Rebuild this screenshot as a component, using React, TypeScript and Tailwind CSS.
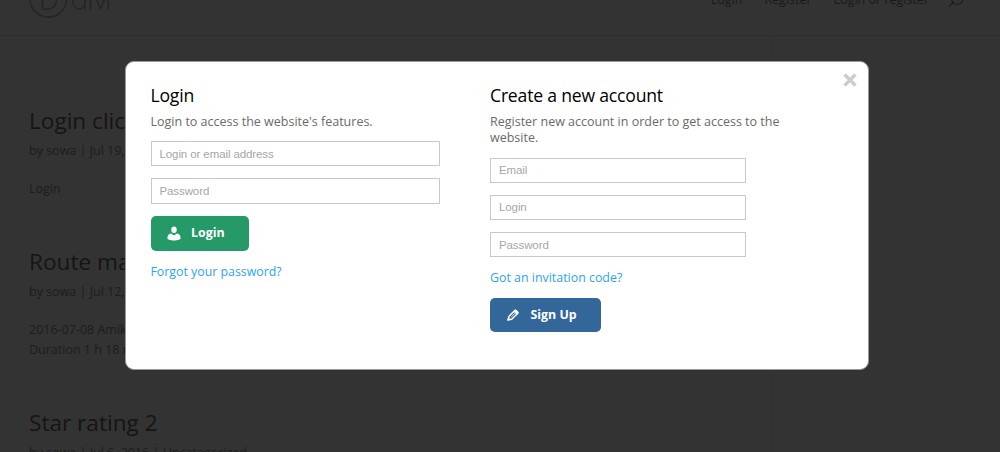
import type { ReactNode } from 'react';

type Post = { title: string; meta: string; body: string[] };

const posts: Post[] = [
    { title: 'Login click', meta: 'by sowa | Jul 19,', body: ['Login'] },
    { title: 'Route map', meta: 'by sowa | Jul 12,', body: ['2016-07-08 Amik', 'Duration 1 h 18 m'] },
    { title: 'Star rating 2', meta: 'by sowa | Jul 6, 2016 | Uncategorized', body: [] },
];

function Field({ label, type = 'text' }: { label: string; type?: string }) {
    return (
        <input
            type={type}
            placeholder={label}
            className="block w-full h-[25.4px] mb-[11.8px] px-2 border border-[#c8c8c8] bg-white font-['Liberation_Sans',sans-serif] text-[11.5px] tracking-[-0.1px] text-[#444] placeholder:text-[#a6a6a6] outline-none"
        />
    );
}

function ActionButton({ className, icon, children }: { className: string; icon: ReactNode; children: ReactNode }) {
    return (
        <button className={`flex items-center h-[34.5px] pl-4 rounded-[5px] text-white text-[12.4px] font-bold ${className}`}>
            {icon}
            <span className="ml-[10.5px]">{children}</span>
        </button>
    );
}

function UserIcon() {
    return (
        <svg width="14" height="15" viewBox="0 0 14 15" fill="currentColor">
            <ellipse cx="7" cy="3.7" rx="2.7" ry="3.3" />
            <path d="M4 7.4 7 9.6 10 7.4C12.5 8 13.6 9.5 13.6 12.2 13.6 13.6 10.5 14.4 7 14.4S.4 13.6.4 12.2C.4 9.5 1.5 8 4 7.4Z" />
        </svg>
    );
}

function PencilIcon() {
    return (
        <svg width="14" height="14" viewBox="0 0 14 14" fill="none" stroke="currentColor">
            <path d="M2.2 11.8 3 8.3 8.8 2.5C9.6 1.7 12.6 4.4 11.8 5.2L5.7 11.2Z" strokeWidth="1.5" strokeLinejoin="round" />
            <path d="M5 9.2 9.6 4.6" strokeWidth=".8" />
            <path d="M1.2 12.8 2.1 9.2 4.8 11.9Z" fill="currentColor" stroke="none" />
            <path d="M8.4 2.5 11.8 5.7" strokeWidth="2.6" />
        </svg>
    );
}

function Header() {
    return (
        <header className="flex justify-between h-9 pl-[29px] pr-[35px] border-b border-[#2d2d2d]">
            <div className="flex -mt-5">
                <svg width="82" height="40" viewBox="0 0 82 40" fill="none" stroke="#22242a">
                    <circle cx="19.3" cy="19" r="18.2" strokeWidth="1.4" />
                    <path d="M13.5 9v20h5c6 0 9-4 9-10s-3-10-9-10Z" strokeWidth="1.4" />
                    <path d="M56 8v21.5M56 22.3a6 6.8 0 1 0-12 0 6 6.8 0 1 0 12 0M61.5 15v14.5M65.5 15l6 14 6-14M79.3 15v14.5" strokeWidth="1.4" />
                </svg>
            </div>
            <nav className="flex -mt-[10px] text-[12.5px] leading-5 text-[#1a1a1a]">
                <span className="mr-[22px]">Login</span>
                <span className="mr-[22px]">Register</span>
                <span className="mr-[18px]">Login or register</span>
                <svg width="18" height="18" viewBox="0 0 18 18" fill="none" stroke="currentColor" strokeWidth="1.1">
                    <circle cx="10.3" cy="8.6" r="5.7" />
                    <path d="M6.2 12.5 2 16.4" />
                </svg>
            </nav>
        </header>
    );
}

export default function App() {
    return (
        <div className="relative h-[452px] overflow-hidden bg-[#333] font-['Open_Sans',sans-serif]">
            <Header />
            <div className="flex h-[416px]">
                <main className="w-[771px] shrink-0 pl-[29px] pt-[68px] border-r border-[#303030] overflow-hidden">
                    {posts.map((post) => (
                        <article key={post.title} className="mb-[46px]">
                            <h2 className="text-[22.6px] leading-[34px] text-[#151515]">{post.title}</h2>
                            <p className="mt-[3px] text-[12.5px] leading-5 text-[#1d1d1d]">{post.meta}</p>
                            <div className="mt-[18px] text-[12.5px] leading-5 text-[#1d1d1d]">
                                {post.body.map((line) => <p key={line}>{line}</p>)}
                            </div>
                        </article>
                    ))}
                </main>
            </div>

            <div className="absolute left-[125px] top-[61px] flex w-[743.5px] h-[309px] pl-[24.5px] pt-[21px] rounded-[9px] border border-[#999] bg-white">
                <section className="w-[289.5px] mr-[50px]">
                    <h3 className="text-[17.6px] tracking-[-0.2px] leading-6 text-black">Login</h3>
                    <p className="mt-[7px] mb-[11px] text-[12.5px] leading-4 text-[#6a6a6a]">Login to access the website's features.</p>
                    <Field label="Login or email address" />
                    <Field label="Password" type="password" />
                    <ActionButton className="w-[98px] mt-[12.6px] bg-[#269969]" icon={<UserIcon />}>Login</ActionButton>
                    <a href="#" className="block mt-3 text-[12.35px] leading-[18px] text-[#2ea3f2]">Forgot your password?</a>
                </section>
                <section className="w-[310px]">
                    <h3 className="text-[17.6px] tracking-[-0.2px] leading-6 text-black">Create a new account</h3>
                    <p className="mt-[7px] mb-[11px] text-[12.5px] leading-[16.3px] text-[#6a6a6a]">
                        Register new account in order to get access to the website.
                    </p>
                    <div className="w-[256px]">
                        <Field label="Email" />
                        <Field label="Login" />
                        <Field label="Password" type="password" />
                    </div>
                    <a href="#" className="block mb-[10.6px] text-[12.4px] leading-[18px] text-[#2ea3f2]">Got an invitation code?</a>
                    <ActionButton className="w-[111px] bg-[#336699]" icon={<PencilIcon />}>Sign Up</ActionButton>
                </section>
                <button aria-label="Close" className="absolute right-[11px] top-[11px]">
                    <svg width="14" height="14" viewBox="0 0 14 14" fill="none" stroke="#ccc" strokeWidth="3.2">
                        <path d="M1.5 1.5 12.5 12.5M12.5 1.5 1.5 12.5" />
                    </svg>
                </button>
            </div>
        </div>
    );
}
